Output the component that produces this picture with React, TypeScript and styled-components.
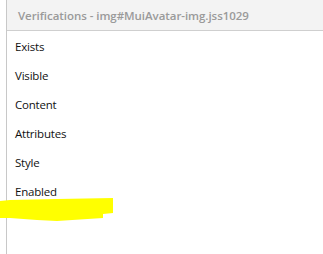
import React from "react";
import styled, { createGlobalStyle } from "styled-components";

const GlobalStyle = createGlobalStyle`
  html, body {
    margin: 0;
    padding: 0;
    background: #ffffff;
  }
  body {
    font-family: "Open Sans", "Noto Sans", sans-serif;
  }
`;

const Page = styled.div`
  position: relative;
  width: 323px;
  height: 254px;
  padding-left: 6px;
  box-sizing: border-box;
  overflow: hidden;
`;

const Panel = styled.div`
  height: 100%;
  border-left: 1px solid #c8c8c8;
  display: flex;
  flex-direction: column;
`;

const Header = styled.div`
  height: 30px;
  background: #f3f3f3;
  border-bottom: 1px solid #cfcfcf;
  display: flex;
  align-items: center;
  padding-left: 11px;
  font-size: 11.5px;
  font-weight: 600;
  color: #9a9a9a;
  letter-spacing: -0.05px;
`;

const List = styled.ul`
  list-style: none;
  margin: 0;
  padding: 1px 0 0 8px;
`;

const Item = styled.li`
  height: 29px;
  display: flex;
  align-items: center;
  font-size: 11.5px;
  color: #111111;
  letter-spacing: -0.2px;
`;

const Highlight = styled.svg`
  position: absolute;
  left: 0;
  top: 196px;
`;

const checks = ["Exists", "Visible", "Content", "Attributes", "Style", "Enabled"];

const App = () => {
  return (
    <>
      <GlobalStyle />
      <Page>
        <Panel>
          <Header>Verifications - img#MuiAvatar-img.jss1029</Header>
          <List>
            {checks.map((c) => (
              <Item key={c}>{c}</Item>
            ))}
          </List>
        </Panel>
        <Highlight width="116" height="28" viewBox="0 0 116 28">
          <path
            d="M0 5 L10 4 L57 3 L113 2 L113 17 L103 18 L103 22 L57 25 L37 24 L10 22 L0 22 Z"
            fill="#ffff00"
          />
        </Highlight>
      </Page>
    </>
  );
};

export default App;
